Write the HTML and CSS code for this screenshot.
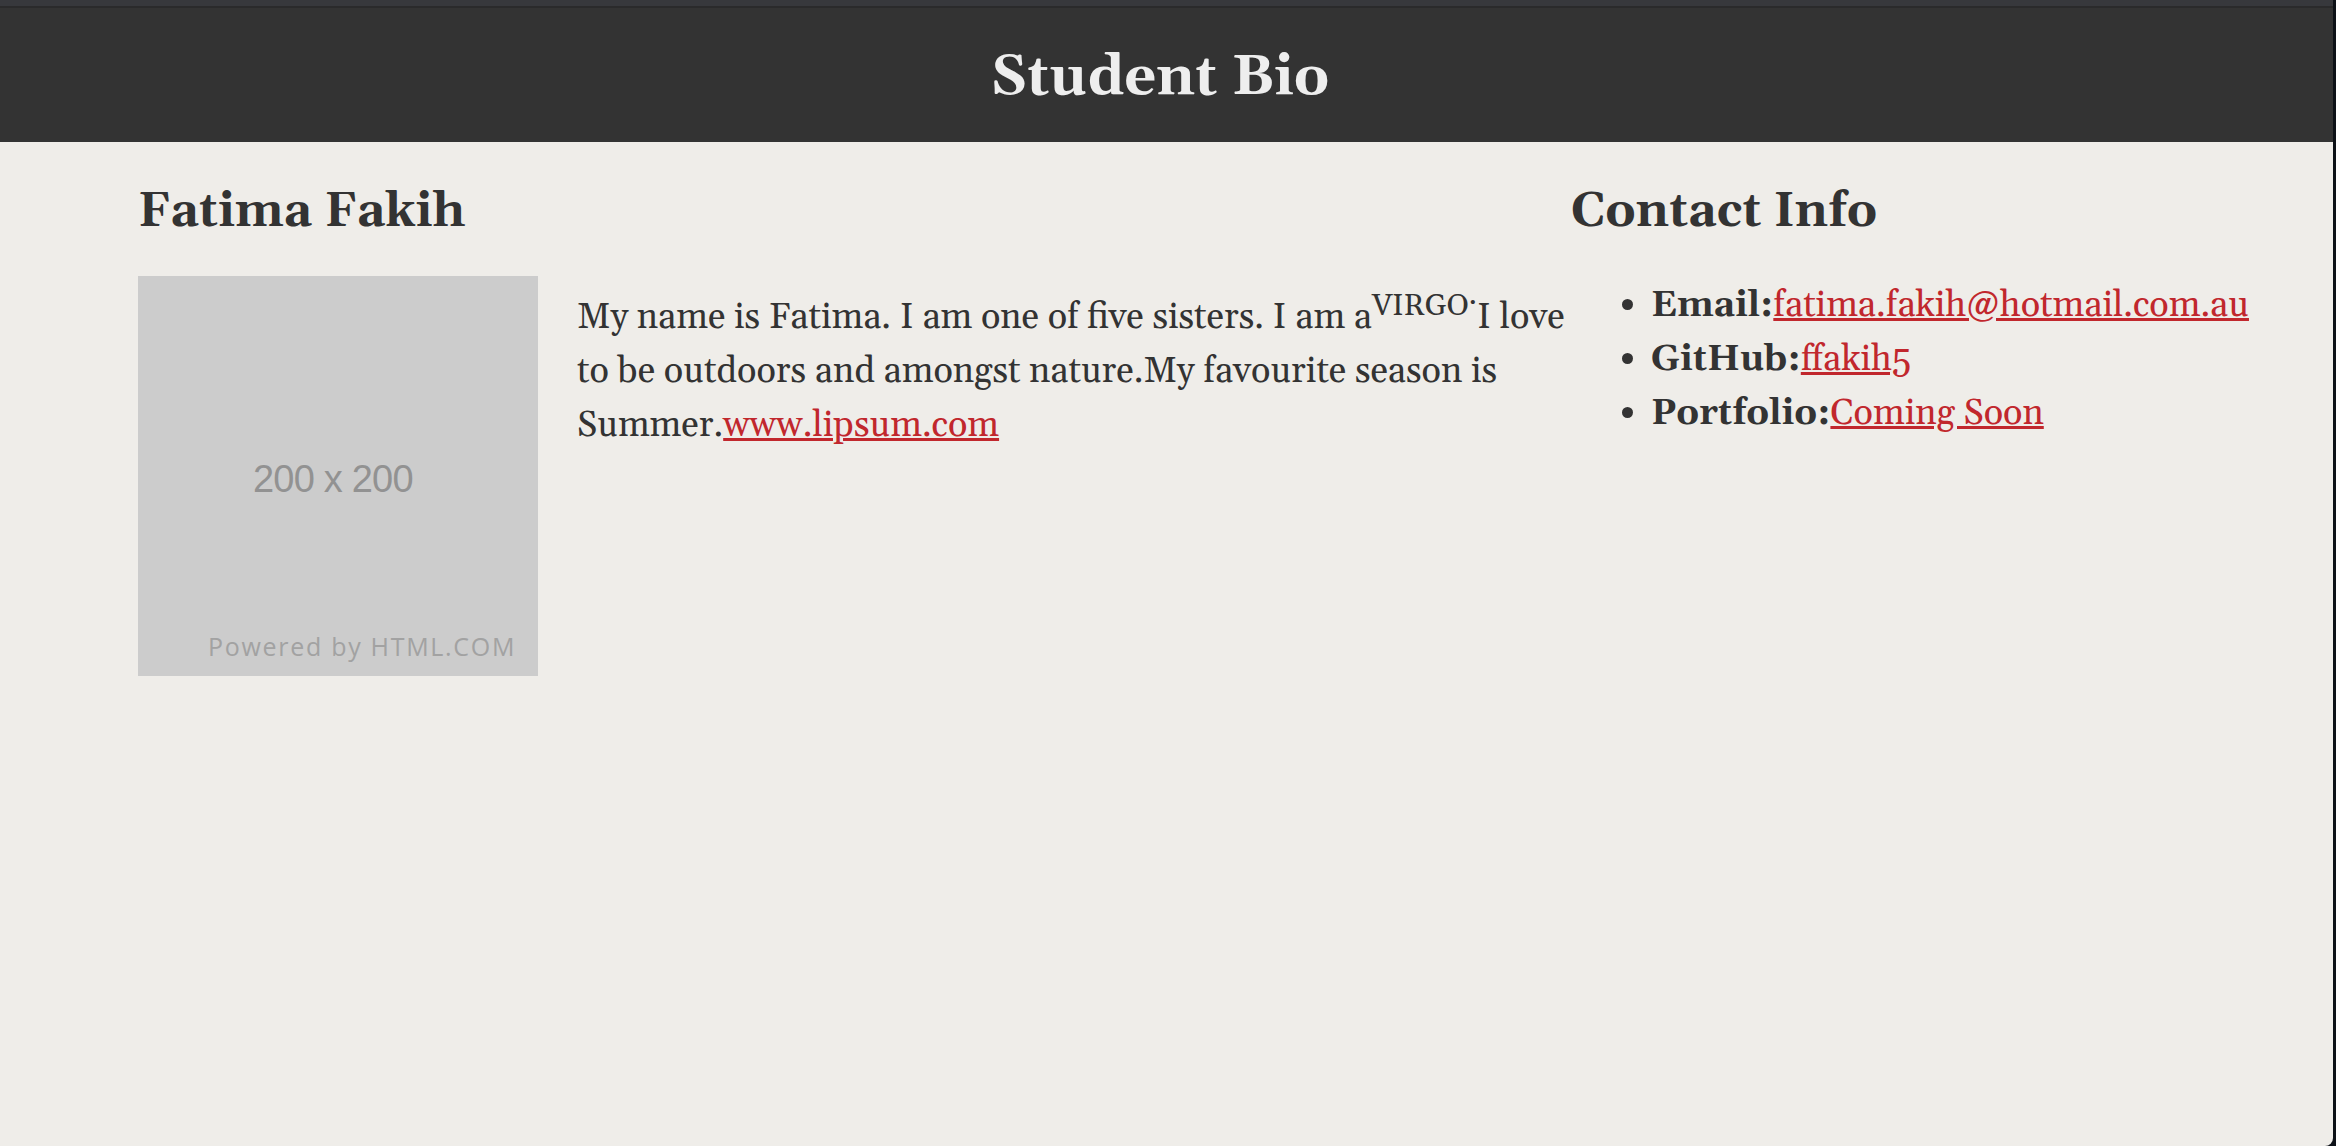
FILE: index.html
```html
<!DOCTYPE html>
<html lang="en">
<head>
<meta charset="utf-8">
<title>Student Bio</title>
<link rel="stylesheet" href="styles.css">
</head>
<body>
<div class="window">
  <div class="chrome"></div>
  <header class="site-header">
    <h1>Student Bio</h1>
  </header>
  <main class="content">
    <section class="bio">
      <h2>Fatima Fakih</h2>
      <div class="bio-body">
        <div class="placeholder">
          <span class="ph-size">200 x 200</span>
          <span class="ph-credit">Powered by HTML.COM</span>
        </div>
        <p class="bio-text">My name is Fatima. I am one of five sisters. I am a<sup>VIRGO<span class="dot">.</span></sup>I love to be outdoors and amongst nature.My favourite season is Summer.<a href="#">www.lipsum.com</a></p>
      </div>
    </section>
    <aside class="contact">
      <h2>Contact Info</h2>
      <ul class="contact-list">
        <li><strong>Email:</strong><a href="#">fatima.fakih@hotmail.com.au</a></li>
        <li><strong>GitHub:</strong><a href="#">ffakih5</a></li>
        <li><strong>Portfolio:</strong><a href="#">Coming Soon</a></li>
      </ul>
    </aside>
  </main>
</div>
</body>
</html>
```
FILE: styles.css
```css
html, body {
  margin: 0;
  padding: 0;
}

body {
  background: #0d1117;
  font-family: "Gelasio", Georgia, "DejaVu Serif", serif;
  color: #333333;
}

.window {
  margin-right: 3px;
  min-height: 1146px;
  background: #efede9;
  border-bottom-right-radius: 8px;
}

.chrome {
  height: 6px;
  background: #37383c;
  border-bottom: 2px solid #2a2a2b;
}

.site-header {
  background: #333333;
  padding: 38px 13px 32px 0;
  text-align: center;
}

.site-header h1 {
  margin: 0;
  font-size: 56px;
  line-height: 64px;
  font-weight: bold;
  color: #eeeeee;
}

.content {
  display: grid;
  grid-template-columns: 1433px 1fr;
  padding: 43px 0 0 138px;
}

.content h2 {
  margin: 0 0 37px;
  font-size: 48px;
  line-height: 54px;
  font-weight: bold;
}

.bio-body {
  display: flex;
  align-items: flex-start;
  gap: 39px;
}

.placeholder {
  position: relative;
  flex: none;
  width: 400px;
  height: 400px;
  background: #cccccc;
}

.ph-size {
  position: absolute;
  left: 115px;
  top: 184px;
  font-family: "Liberation Sans", Arial, sans-serif;
  font-size: 38px;
  line-height: 1;
  letter-spacing: -0.8px;
  color: #929292;
  white-space: nowrap;
}

.ph-credit {
  position: absolute;
  left: 70px;
  top: 358px;
  font-family: "Open Sans", sans-serif;
  font-size: 25px;
  line-height: 1;
  letter-spacing: 1.7px;
  color: #a2a2a2;
  white-space: nowrap;
}

.bio-text {
  margin: 0;
  padding-top: 3px;
  width: 994px;
  font-size: 36px;
  line-height: 54px;
}

.bio-text sup .dot {
  vertical-align: 11px;
  line-height: 0;
}

a {
  color: #c1272d;
  text-decoration: underline;
}

.contact-list {
  margin: 0;
  padding: 3px 0 0 80px;
  font-size: 36px;
  line-height: 54px;
}

.contact-list li::marker {
  letter-spacing: 3px;
}
```
